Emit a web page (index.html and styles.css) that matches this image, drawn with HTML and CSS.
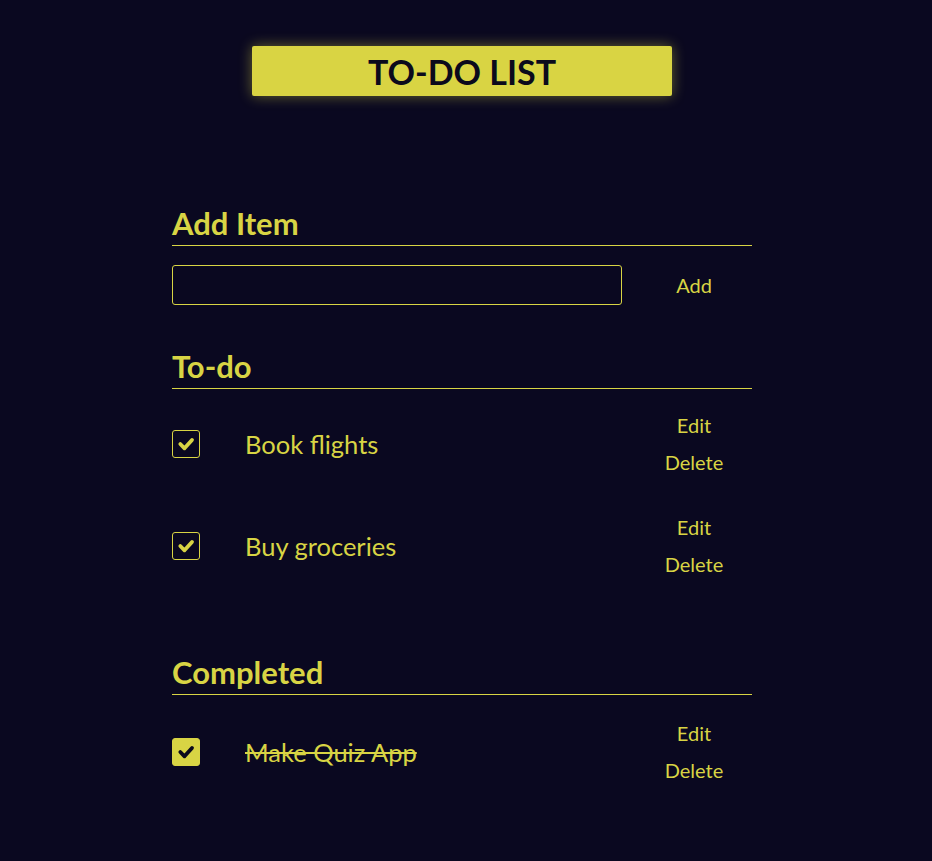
FILE: index.html
```html
<!DOCTYPE html>
<html lang="en">
<head>
<meta charset="utf-8">
<title>To-Do List</title>
<link rel="stylesheet" href="styles.css">
</head>
<body>
<div class="page">
  <header class="header">
    <h1 class="title">TO-DO LIST</h1>
  </header>
  <main class="container">
    <section class="section add-section">
      <h2 class="heading">Add Item</h2>
      <div class="add-row">
        <input class="add-input" type="text" aria-label="New item">
        <div class="actions"><button class="btn">Add</button></div>
      </div>
    </section>
    <section class="section todo-section">
      <h2 class="heading">To-do</h2>
      <ul class="list">
        <li class="item">
          <span class="check"><svg viewBox="0 0 28 28" width="28" height="28"><path d="M8.3 14 L12.5 18.3 L20 10" fill="none" stroke="currentColor" stroke-width="3.8" stroke-linecap="round" stroke-linejoin="round"/></svg></span>
          <span class="label">Book flights</span>
          <div class="actions actions-col"><button class="btn">Edit</button><button class="btn">Delete</button></div>
        </li>
        <li class="item">
          <span class="check"><svg viewBox="0 0 28 28" width="28" height="28"><path d="M8.3 14 L12.5 18.3 L20 10" fill="none" stroke="currentColor" stroke-width="3.8" stroke-linecap="round" stroke-linejoin="round"/></svg></span>
          <span class="label">Buy groceries</span>
          <div class="actions actions-col"><button class="btn">Edit</button><button class="btn">Delete</button></div>
        </li>
      </ul>
    </section>
    <section class="section done-section">
      <h2 class="heading">Completed</h2>
      <ul class="list">
        <li class="item completed">
          <span class="check check-filled"><svg viewBox="0 0 28 28" width="28" height="28"><path d="M8.3 14 L12.5 18.3 L20 10" fill="none" stroke="currentColor" stroke-width="3.8" stroke-linecap="round" stroke-linejoin="round"/></svg></span>
          <span class="label">Make Quiz App</span>
          <div class="actions actions-col"><button class="btn">Edit</button><button class="btn">Delete</button></div>
        </li>
      </ul>
    </section>
  </main>
</div>
</body>
</html>
```
FILE: styles.css
```css
* { box-sizing: border-box; }
html, body { margin: 0; padding: 0; }
body {
  background: #0a0820;
  color: #d8d444;
  font-family: Lato, "Liberation Sans", sans-serif;
  min-height: 861px;
}
.page {
  width: 924px;
  padding-top: 46px;
  padding-bottom: 40px;
}
.header {
  display: flex;
  justify-content: center;
}
.title {
  margin: 0;
  width: 420px;
  height: 50px;
  background: #d9d443;
  color: #0b0a1c;
  font-size: 34px;
  font-weight: 700;
  line-height: 52px;
  text-align: center;
  border-radius: 2px;
  box-shadow: 0 0 14px rgba(217, 212, 67, 0.45);
}
.container {
  width: 580px;
  margin: 0 auto;
}
.heading {
  margin: 0;
  height: 38px;
  font-size: 31px;
  font-weight: 700;
  line-height: 31px;
  padding-bottom: 6px;
  border-bottom: 1px solid #d8d444;
}
.add-section { margin-top: 112px; }
.add-row {
  display: flex;
  align-items: center;
  margin-top: 19px;
}
.add-input {
  width: 450px;
  height: 40px;
  background: transparent;
  border: 1px solid #d8d444;
  border-radius: 3px;
  color: #d8d444;
  font: inherit;
  font-size: 20px;
  padding: 0 10px;
  outline: none;
}
.actions {
  margin-left: auto;
  width: 116px;
  display: flex;
  justify-content: center;
}
.actions-col {
  flex-direction: column;
  align-items: center;
}
.btn {
  background: transparent;
  border: 0;
  color: #d8d444;
  font-family: inherit;
  font-size: 20px;
  height: 37px;
  line-height: 37px;
  padding: 0 8px;
  cursor: pointer;
}
.todo-section { margin-top: 46px; }
.done-section { margin-top: 60px; }
.list {
  list-style: none;
  margin: 4px 0 0;
  padding: 0;
}
.item {
  display: flex;
  align-items: center;
  padding: 14px 0;
}
.item.completed { padding-top: 16px; }
.check {
  width: 28px;
  height: 28px;
  flex: none;
  border: 1.5px solid #d8d444;
  border-radius: 3px;
  color: #d8d444;
  display: flex;
  align-items: center;
  justify-content: center;
}
.check svg { display: block; flex: none; }
.check-filled {
  background: #d8d444;
  color: #0b0a1c;
}
.label {
  margin-left: 45px;
  font-size: 25.5px;
}
.completed .label {
  text-decoration: line-through;
}
```
